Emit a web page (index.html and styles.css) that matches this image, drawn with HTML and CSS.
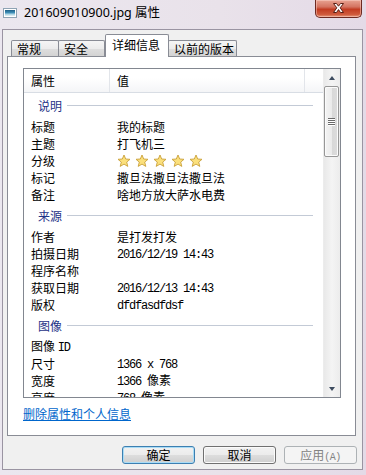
FILE: index.html
```html
<!DOCTYPE html>
<html lang="zh-CN">
<head>
<meta charset="utf-8">
<title>201609010900.jpg 属性</title>
<link rel="stylesheet" href="styles.css">
</head>
<body>
<div class="window">
  <div class="titlebar">
    <div class="title-icon"><div class="title-icon-img"></div></div>
    <div class="title-text">201609010900.jpg 属性</div>
    <div class="close-btn">
      <svg width="47" height="18" viewBox="0 0 47 18">
        <path d="M18.5 4.5 L21.5 4.5 L23.5 7.2 L25.5 4.5 L28.5 4.5 L25.2 8.8 L28.5 13.5 L25.5 13.5 L23.5 10.6 L21.5 13.5 L18.5 13.5 L21.8 8.8 Z" fill="#ffffff" stroke="#5a1f14" stroke-width="1" stroke-linejoin="round"/>
      </svg>
    </div>
  </div>
  <div class="client">
    <div class="tabs">
      <div class="tab tab-w1">常规</div>
      <div class="tab tab-w2">安全</div>
      <div class="tab tab-active">详细信息</div>
      <div class="tab tab-w4">以前的版本</div>
    </div>
    <div class="panel">
      <div class="listbox">
        <div class="list-main">
          <div class="list-header">
            <div class="hcol hcol-1">属性</div>
            <div class="hcol hcol-2">值</div>
            <div class="hcol hcol-3"></div>
          </div>
          <div class="group"><span class="group-name">说明</span><span class="group-line"></span></div>
          <div class="row"><span class="label">标题</span><span class="value">我的标题</span></div>
          <div class="row"><span class="label">主题</span><span class="value">打飞机三</span></div>
          <div class="row"><span class="label">分级</span><span class="value stars">
            <svg class="star" width="14" height="14" viewBox="0 0 14 14"><path d="M7 1 L8.7 5 L13 5.3 L9.7 8.1 L10.8 12.4 L7 10.1 L3.2 12.4 L4.3 8.1 L1 5.3 L5.3 5 Z" fill="#fbe07c" stroke="#c9a03a" stroke-width="0.9" stroke-linejoin="round"/></svg>
            <svg class="star" width="14" height="14" viewBox="0 0 14 14"><path d="M7 1 L8.7 5 L13 5.3 L9.7 8.1 L10.8 12.4 L7 10.1 L3.2 12.4 L4.3 8.1 L1 5.3 L5.3 5 Z" fill="#fbe07c" stroke="#c9a03a" stroke-width="0.9" stroke-linejoin="round"/></svg>
            <svg class="star" width="14" height="14" viewBox="0 0 14 14"><path d="M7 1 L8.7 5 L13 5.3 L9.7 8.1 L10.8 12.4 L7 10.1 L3.2 12.4 L4.3 8.1 L1 5.3 L5.3 5 Z" fill="#fbe07c" stroke="#c9a03a" stroke-width="0.9" stroke-linejoin="round"/></svg>
            <svg class="star" width="14" height="14" viewBox="0 0 14 14"><path d="M7 1 L8.7 5 L13 5.3 L9.7 8.1 L10.8 12.4 L7 10.1 L3.2 12.4 L4.3 8.1 L1 5.3 L5.3 5 Z" fill="#fbe07c" stroke="#c9a03a" stroke-width="0.9" stroke-linejoin="round"/></svg>
            <svg class="star" width="14" height="14" viewBox="0 0 14 14"><path d="M7 1 L8.7 5 L13 5.3 L9.7 8.1 L10.8 12.4 L7 10.1 L3.2 12.4 L4.3 8.1 L1 5.3 L5.3 5 Z" fill="#fbe07c" stroke="#c9a03a" stroke-width="0.9" stroke-linejoin="round"/></svg>
          </span></div>
          <div class="row"><span class="label">标记</span><span class="value">撒旦法撒旦法撒旦法</span></div>
          <div class="row"><span class="label">备注</span><span class="value">啥地方放大萨水电费</span></div>
          <div class="group"><span class="group-name">来源</span><span class="group-line"></span></div>
          <div class="row"><span class="label">作者</span><span class="value">是打发打发</span></div>
          <div class="row"><span class="label">拍摄日期</span><span class="value mono">2016/12/19 14:43</span></div>
          <div class="row"><span class="label">程序名称</span><span class="value"></span></div>
          <div class="row"><span class="label">获取日期</span><span class="value mono">2016/12/13 14:43</span></div>
          <div class="row"><span class="label">版权</span><span class="value mono">dfdfasdfdsf</span></div>
          <div class="group"><span class="group-name">图像</span><span class="group-line"></span></div>
          <div class="row"><span class="label">图像 <span class="mono">ID</span></span><span class="value"></span></div>
          <div class="row"><span class="label">尺寸</span><span class="value mono">1366 x 768</span></div>
          <div class="row"><span class="label">宽度</span><span class="value"><span class="mono">1366 </span>像素</span></div>
          <div class="row"><span class="label">高度</span><span class="value"><span class="mono">768 </span>像素</span></div>
        </div>
        <div class="scrollbar">
          <div class="sb-btn"><span class="arrow-up"></span></div>
          <div class="sb-thumb">
            <span class="grip"></span><span class="grip"></span><span class="grip"></span><span class="grip"></span>
          </div>
          <div class="sb-track"></div>
          <div class="sb-btn"><span class="arrow-down"></span></div>
        </div>
      </div>
      <a class="link" href="#">删除属性和个人信息</a>
    </div>
    <div class="buttons">
      <div class="btn btn-default">确定</div>
      <div class="btn">取消</div>
      <div class="btn btn-disabled">应用<span class="mono-small">(A)</span></div>
    </div>
  </div>
</div>
</body>
</html>
```
FILE: styles.css
```css
* { box-sizing: border-box; }
html, body { margin: 0; padding: 0; }
body {
  width: 366px;
  height: 475px;
  overflow: hidden;
  font-family: "Noto Sans CJK SC", "Noto Sans", sans-serif;
  font-size: 12px;
  color: #000;
}
.window {
  width: 366px;
  height: 475px;
  background: linear-gradient(to right, #ebe7ef, #e9e2ea 60%, #e4dae7);
  display: flex;
  flex-direction: column;
}
.titlebar {
  height: 29px;
  display: flex;
  align-items: flex-start;
  flex-shrink: 0;
}
.title-icon {
  margin: 8px 0 0 3px;
  width: 14px;
  height: 10px;
  border: 1px solid #8fa3b4;
  background: #fff;
  padding: 1px;
}
.title-icon-img {
  width: 100%;
  height: 100%;
  background: linear-gradient(to bottom, #1d5f86 0%, #3f8fb8 45%, #a8d3e4 70%, #e7f1f4 100%);
}
.title-text {
  margin: 4px 0 0 7px;
  font-family: "Noto Sans", "Noto Sans CJK SC", sans-serif;
  font-size: 12.5px;
  line-height: 18px;
  color: #000;
}
.close-btn {
  margin-left: auto;
  margin-right: 4px;
  width: 47px;
  height: 18px;
  border: 1px solid #6d2a22;
  border-top: none;
  border-radius: 0 0 5px 5px;
  background: linear-gradient(to bottom, #e8a392 0%, #d47461 40%, #c23c22 55%, #cf5a3c 85%, #e79a7e 100%);
  box-shadow: inset 0 0 0 1px rgba(255,220,210,0.45);
}
.close-btn svg { display: block; margin: -1px 0 0 -1px; }

.client {
  flex: 1;
  margin: 0 3px 5px 2px;
  background: #f0f0f0;
  border: 1px solid #9a94a2;
  display: flex;
  flex-direction: column;
}
.tabs {
  display: flex;
  align-items: flex-end;
  height: 22px;
  margin-top: 4px;
  padding-left: 8px;
}
.tab {
  height: 16px;
  border: 1px solid #898c95;
  border-bottom: none;
  border-radius: 2px 2px 0 0;
  background: linear-gradient(to bottom, #f5f5f5 0%, #ececec 50%, #dedede 51%, #d3d3d3 100%);
  font-size: 12px;
  line-height: 15px;
  padding-left: 5px;
  margin-right: -1px;
}
.tab-w1 { width: 48px; }
.tab-w2 { width: 47px; }
.tab-w4 { width: 69px; }
.tab-active {
  width: 64px;
  height: 23px;
  margin-bottom: -1px;
  background: #fff;
  position: relative;
  z-index: 2;
  line-height: 20px;
  padding-left: 6px;
  margin-left: 1px;
}
.panel {
  margin-left: 4px;
  width: 349px;
  height: 380px;
  border: 1px solid #898c95;
  background: #fff;
  padding: 11px 14px 0 15px;
  display: flex;
  flex-direction: column;
}
.listbox {
  width: 318px;
  height: 330px;
  border: 1px solid #828790;
  display: flex;
  flex-shrink: 0;
}
.list-main {
  flex: 1;
  overflow: hidden;
}
.list-header {
  height: 24px;
  display: flex;
  background: linear-gradient(to bottom, #ffffff 0%, #ffffff 40%, #f4f5f7 100%);
  border-bottom: 1px solid #d8dde4;
}
.hcol {
  line-height: 23px;
  padding-left: 7px;
  border-right: 1px solid #e2e5ea;
}
.hcol-1 { width: 86px; }
.hcol-2 { width: 195px; }
.hcol-3 { flex: 1; border-right: none; }
.group {
  height: 25px;
  display: flex;
  align-items: center;
  padding: 0 10px 1px 14px;
}
.group-name {
  color: #1e3287;
  line-height: 17px;
}
.group-line {
  flex: 1;
  height: 1px;
  background: #c3cad6;
  margin-left: 5px;
}
.row {
  height: 17px;
  display: flex;
  align-items: center;
  line-height: 17px;
  white-space: nowrap;
}
.label {
  width: 93px;
  padding-left: 7px;
  flex-shrink: 0;
}
.value { flex: 1; }
.mono {
  font-family: "Liberation Mono", monospace;
  font-size: 12px;
  letter-spacing: -1.2px;
}
.value.mono { padding-top: 3px; }
.stars {
  display: flex;
  gap: 4px;
  align-items: center;
}
.star { display: block; }

.scrollbar {
  width: 17px;
  flex-shrink: 0;
  display: flex;
  flex-direction: column;
  background: linear-gradient(to right, #e9e9e9, #f4f4f4 50%, #ececec);
  border-left: 1px solid #ececec;
}
.sb-btn {
  height: 17px;
  display: flex;
  align-items: center;
  justify-content: center;
  flex-shrink: 0;
}
.arrow-up {
  width: 0; height: 0;
  border-left: 3.5px solid transparent;
  border-right: 3.5px solid transparent;
  border-bottom: 4px solid #3d4b5f;
}
.arrow-down {
  width: 0; height: 0;
  border-left: 3.5px solid transparent;
  border-right: 3.5px solid transparent;
  border-top: 4px solid #3d4b5f;
}
.sb-thumb {
  height: 71px;
  margin: 0 1px 0 0;
  border: 1px solid #979797;
  border-radius: 2px;
  background: linear-gradient(to right, #f4f4f4, #ebebeb 50%, #d8d8d8 51%, #dcdcdc);
  box-shadow: inset 0 0 0 1px #fbfbfb;
  display: flex;
  flex-direction: column;
  align-items: center;
  justify-content: center;
  gap: 1px;
}
.grip {
  width: 7px;
  height: 1px;
  background: #6a6a6a;
  box-shadow: 0 1px 0 #fff;
}
.sb-track { flex: 1; }

.link {
  margin-top: 9px;
  color: #0066cc;
  text-decoration: underline;
  line-height: 14px;
  font-size: 12px;
  align-self: flex-start;
}
.buttons {
  display: flex;
  justify-content: flex-end;
  gap: 8px;
  margin-top: 10px;
  padding-right: 5px;
}
.btn {
  width: 73px;
  height: 18px;
  border: 1px solid #707070;
  border-radius: 3px;
  background: linear-gradient(to bottom, #f2f2f2 0%, #ebebeb 50%, #dddddd 51%, #cfcfcf 100%);
  box-shadow: inset 0 0 0 1px #fbfbfb;
  text-align: center;
  line-height: 16px;
  font-size: 12px;
}
.btn-default {
  border-color: #3c7fb1;
  box-shadow: inset 0 0 0 1px #a9dcf6;
}
.btn-disabled {
  border-color: #adb2b5;
  background: #f4f4f4;
  color: #838383;
  box-shadow: none;
}
.mono-small {
  font-family: "Liberation Mono", monospace;
  font-size: 10px;
  letter-spacing: -0.5px;
}
```
